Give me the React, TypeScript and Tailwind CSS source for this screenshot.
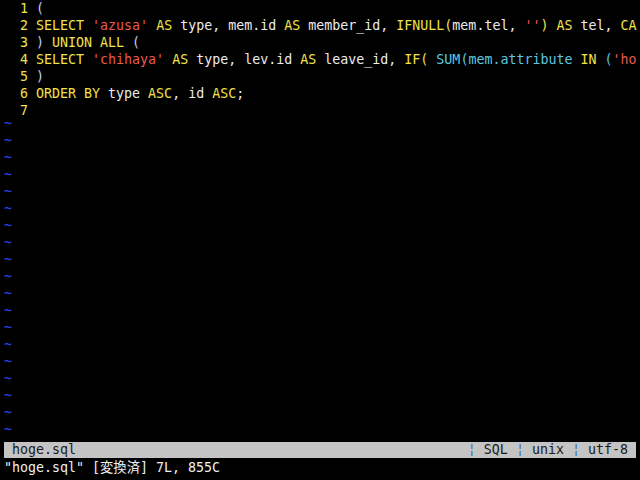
import React from "react";

const Y = "text-[#f2e24a]";
const R = "text-[#e85a4f]";
const C = "text-[#5cc8e0]";
const W = "text-[#ececec]";
const P = "text-[#b4d4ff]";

type Seg = [string, string];

const lines: Seg[][] = [
  [["(", P]],
  [
    ["SELECT", Y], [" ", W], ["'azusa'", R], [" ", W], ["AS", Y], [" type, mem.id ", W], ["AS", Y],
    [" member_id, ", W], ["IFNULL(", Y], ["mem.tel, ", W], ["''", R], [")", Y], [" ", W], ["AS", Y],
    [" tel, ", W], ["CA", Y],
  ],
  [[")", P], [" ", W], ["UNION ALL", Y], [" ", W], ["(", P]],
  [
    ["SELECT", Y], [" ", W], ["'chihaya'", R], [" ", W], ["AS", Y], [" type, lev.id ", W], ["AS", Y],
    [" leave_id, ", W], ["IF(", Y], [" ", W], ["SUM(mem.attribute", C], [" ", W], ["IN", Y], [" ", W],
    ["(", C], ["'ho", R],
  ],
  [[")", P]],
  [["ORDER BY", Y], [" type ", W], ["ASC", Y], [", id ", W], ["ASC", Y], [";", W]],
  [],
];

export default function App() {
  return (
    <div
      className="w-[640px] h-[480px] bg-black overflow-hidden text-[13.3px] leading-[17px] whitespace-pre"
      style={{ fontFamily: '"DejaVu Sans Mono", "Noto Sans CJK JP", monospace' }}
    >
      <div className="h-[442px] overflow-hidden pl-[4px]">
        {lines.map((segs, i) => (
          <div key={i} className="flex h-[17px] overflow-hidden">
            <span className={`${Y} w-[32px] shrink-0 text-right pr-[8px]`}>{i + 1}</span>
            <span className="shrink-0">
              {segs.map(([t, c], j) => (
                <span key={j} className={c}>
                  {t}
                </span>
              ))}
            </span>
          </div>
        ))}
        {Array.from({ length: 19 }).map((_, i) => (
          <div key={"t" + i} className="h-[17px] text-[#2a46e8]">
            <span className="inline-block -translate-y-[4px]">~</span>
          </div>
        ))}
      </div>
      <div className="mx-[4px] h-[16px] leading-[16px] bg-[#c4c4c4] text-[#1a1a1a] flex justify-between px-[8px]">
        <span>hoge.sql</span>
        <span>
          <span className="text-[#3a6ad0]">¦</span> SQL <span className="text-[#3a6ad0]">¦</span> unix{" "}
          <span className="text-[#3a6ad0]">¦</span> utf-8
        </span>
      </div>
      <div className="h-[17px] mt-[1px] text-[#f0f0f0] pl-[4px]">"hoge.sql" [変換済] 7L, 855C</div>
    </div>
  );
}
